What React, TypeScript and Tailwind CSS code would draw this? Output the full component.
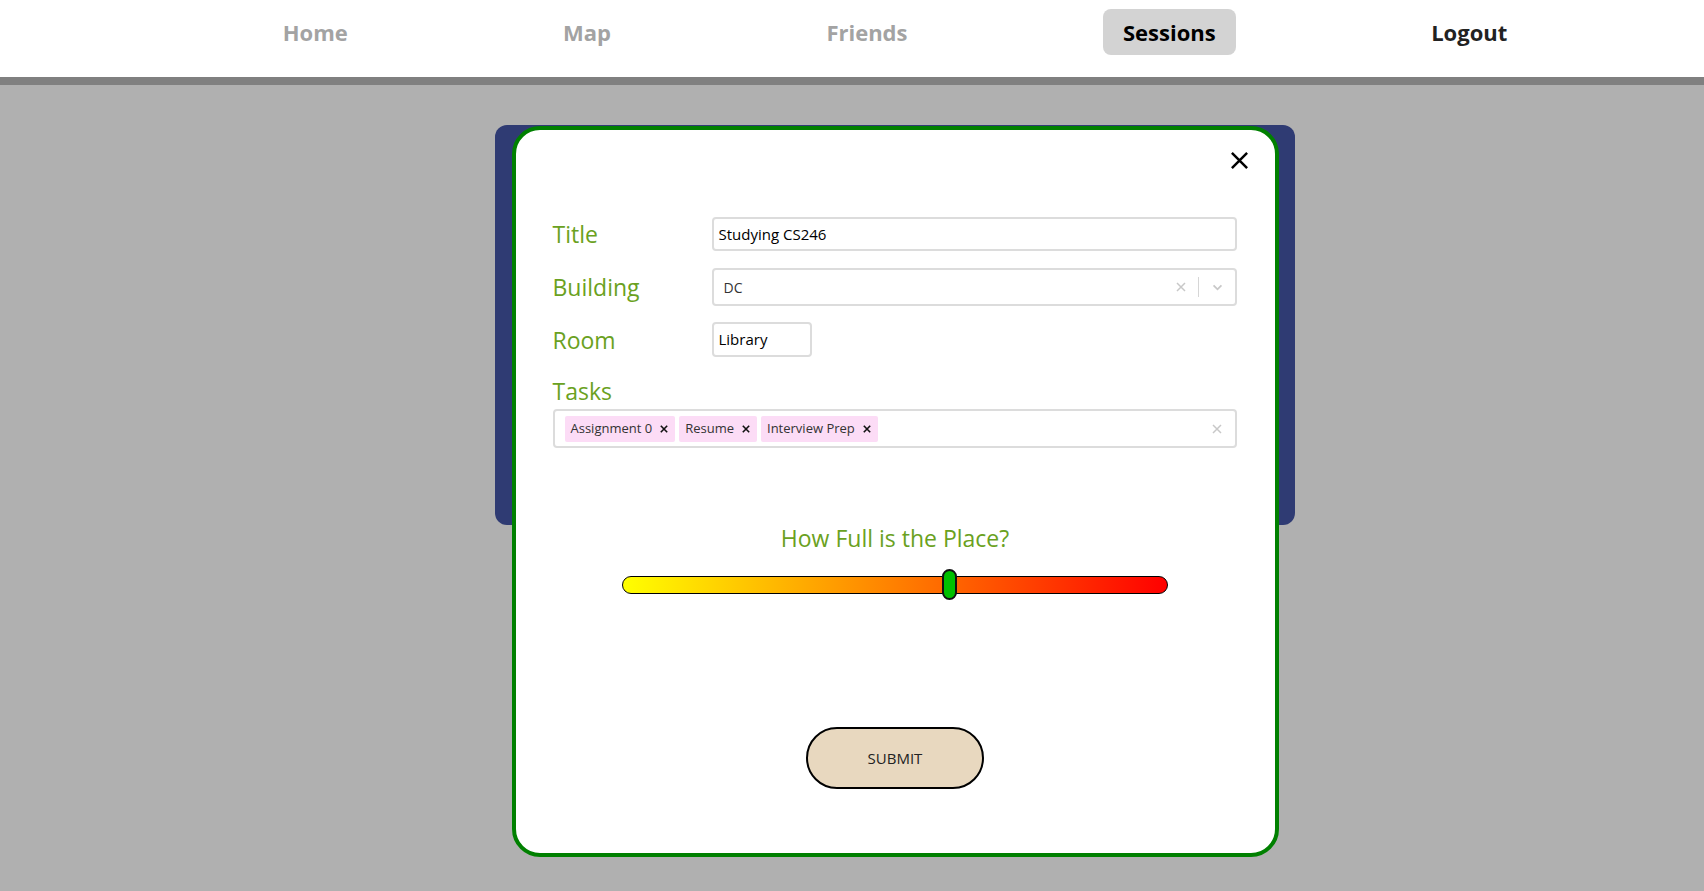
const navItems = ['Home', 'Map', 'Friends', 'Sessions', 'Logout'];

function Cross({ size, color, width }: { size: number; color: string; width: number }) {
    return (
        <svg width={size} height={size} viewBox="0 0 20 20" fill="none">
            <path d="M2 2L18 18M18 2L2 18" stroke={color} strokeWidth={width} strokeLinecap="butt" />
        </svg>
    );
}

function Chip({ label }: { label: string }) {
    return (
        <div className="h-[26px] bg-[#fcdcf6] rounded-[2px] flex items-center pl-[6px] pr-[7px] gap-[8px] text-[13px] text-[#333]">
            <span>{label}</span>
            <Cross size={8} color="#111" width={4} />
        </div>
    );
}

function App() {
    const fullness = 0.6;

    return (
        <div className="min-h-screen bg-[#b0b0b0] font-['Open_Sans',sans-serif]">
            {/* top nav */}
            <div className="h-[85px] bg-white border-b-[8px] border-[#808080]">
                <div className="ml-[175px] w-[1440px] flex justify-around pt-[9px]">
                    {navItems.map((item) => (
                        <div
                            key={item}
                            className={
                                item === 'Sessions'
                                    ? 'h-[46px] w-[133px] flex items-center justify-center rounded-[8px] bg-[#d3d3d3] text-[22px] font-bold text-black'
                                    : item === 'Logout'
                                      ? 'h-[46px] px-5 flex items-center text-[22px] font-bold text-[#222]'
                                      : 'h-[46px] px-5 flex items-center text-[22px] font-bold text-[#a3a3a3]'
                            }
                        >
                            {item}
                        </div>
                    ))}
                </div>
            </div>

            <div className="flex justify-center pl-[86px] pt-[40px]">
                <div className="grid">
                    <div className="col-start-1 row-start-1 w-[800px] h-[400px] rounded-[12px] bg-[#2f3b73]"></div>

                    <div className="col-start-1 row-start-1 justify-self-center mt-[1px] w-[767px] h-[731px] bg-white border-4 border-[#008000] rounded-[28px] flex flex-col">
                        <div className="flex justify-end pt-[21px] pr-[26px]">
                            <Cross size={19} color="#000" width={2.6} />
                        </div>

                        <div className="pl-[37px] pr-[38px] mt-[47px] flex flex-col text-[#6aa121]">
                            <div className="flex items-center">
                                <div className="w-[159px] text-[23px] leading-[32px]">Title</div>
                                <div className="flex-1 h-[34px] border-2 border-[#dcdcdc] rounded-[4px] flex items-center pl-[5px] text-[15px] text-black">
                                    Studying CS246
                                </div>
                            </div>

                            <div className="flex items-center mt-[17px]">
                                <div className="w-[159px] text-[23px] leading-[32px]">Building</div>
                                <div className="flex-1 h-[38px] border-2 border-[#dcdcdc] rounded-[4px] flex items-center pl-[10px] text-[14px] text-[#333]">
                                    <span className="flex-1">DC</span>
                                    <div className="pr-[12px]">
                                        <Cross size={10} color="#c8c8c8" width={3} />
                                    </div>
                                    <div className="w-px h-[20px] bg-[#d6d6d6]"></div>
                                    <div className="pl-[13px] pr-[12px]">
                                        <svg width="11" height="7" viewBox="0 0 12 8" fill="none">
                                            <path d="M1.5 1.5L6 6L10.5 1.5" stroke="#c8c8c8" strokeWidth="2" />
                                        </svg>
                                    </div>
                                </div>
                            </div>

                            <div className="flex items-center mt-[16px]">
                                <div className="w-[159px] text-[23px] leading-[32px]">Room</div>
                                <div className="w-[100px] h-[35px] border-2 border-[#dcdcdc] rounded-[4px] flex items-center pl-[5px] text-[15px] text-black">
                                    Library
                                </div>
                            </div>

                            <div className="mt-[18px] text-[23px] leading-[32px]">Tasks</div>
                            <div className="mt-[2px] h-[39px] border-2 border-[#dcdcdc] rounded-[4px] flex items-center pl-[10px] pr-[13px]">
                                <div className="flex-1 flex gap-[4px]">
                                    <Chip label="Assignment 0" />
                                    <Chip label="Resume" />
                                    <Chip label="Interview Prep" />
                                </div>
                                <Cross size={10} color="#c8c8c8" width={3} />
                            </div>
                        </div>

                        <div className="mt-[74px] text-center text-[23px] leading-[32px] text-[#6aa121]">How Full is the Place?</div>

                        <div className="mt-[15px] flex justify-center">
                            <div className="relative w-[546px] h-[31px] flex items-center">
                                <div className="w-full h-[18px] rounded-full border-[1.5px] border-black bg-[linear-gradient(to_right,#ffff00,#ff8000,#ff0000)]"></div>
                                <div
                                    className="absolute top-0 w-[15px] h-[31px] rounded-full border-2 border-[#111] bg-[#00c000]"
                                    style={{ left: `calc(${fullness * 100}% - 8px)` }}
                                ></div>
                            </div>
                        </div>

                        <div className="mt-[127px] flex justify-center">
                            <button className="w-[178px] h-[62px] rounded-full border-2 border-black bg-[#e8d8bf] text-[15px] text-[#222]">
                                SUBMIT
                            </button>
                        </div>
                    </div>
                </div>
            </div>
        </div>
    );
}

export default App;
